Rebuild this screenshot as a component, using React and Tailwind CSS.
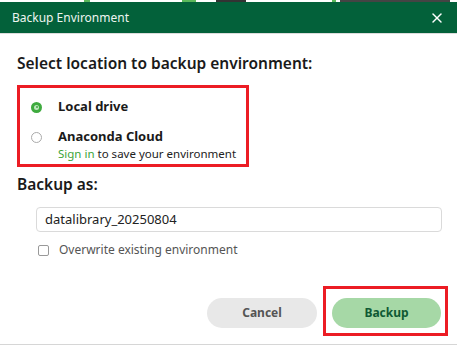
import { X } from 'lucide-react'

export default function App() {
  return (
    <div className="w-[457px] h-[348px] overflow-hidden bg-white flex flex-col text-[#1a1a1a]" style={{ fontFamily: '"Noto Sans", "Open Sans", sans-serif' }}>
      <div className="h-[2px] bg-white flex">
        <div className="ml-[84px] w-[6px] bg-[#5bb85b]" />
        <div className="ml-[92px] w-[14px] bg-[#5bb85b]" />
        <div className="ml-[20px] w-[30px] bg-[#333]" />
        <div className="ml-[86px] w-[4px] bg-[#5bb85b]" />
        <div className="ml-[4px] w-[110px] bg-[#444]" />
      </div>
      <div className="h-[32px] bg-[#03613a] flex items-center justify-between pl-3 pr-[12px] border-b border-[#dcdcdc]">
        <span className="text-[12px] text-[#eef5f0]">Backup Environment</span>
        <X className="w-[16px] h-[16px] text-white" strokeWidth={2.2} />
      </div>

      <div className="flex-1 flex flex-col px-[17px]">
        <h2 className="mt-[19px] text-[15.5px] leading-[20px] font-semibold">Select location to backup environment:</h2>

        <div className="mt-[12px] w-[232px] h-[82px] border-[3px] border-[#ec1c24] pl-[11px] pt-[10px]">
          <label className="flex items-center gap-[16px] h-[18px]">
            <span className="w-[11px] h-[11px] rounded-full bg-[#3fab3f] flex items-center justify-center">
              <span className="w-[5px] h-[5px] rounded-full bg-[#bfe6bf] flex items-center justify-center">
                <span className="w-[2px] h-[2px] rounded-full bg-[#3fab3f]" />
              </span>
            </span>
            <span className="text-[13px] font-bold">Local drive</span>
          </label>
          <label className="flex items-center gap-[16px] h-[18px] mt-[12px]">
            <span className="w-[11px] h-[11px] rounded-full border border-[#aaa] bg-white" />
            <span className="text-[13px] font-bold">Anaconda Cloud</span>
          </label>
          <p className="ml-[27px] text-[11.5px] leading-[14px] mt-[1px] text-[#222]">
            <span className="text-[#3aa53a]">Sign in</span> to save your environment
          </p>
        </div>

        <h2 className="mt-[7px] text-[15.5px] leading-[20px] font-semibold">Backup as:</h2>

        <div className="mt-[13px] ml-[19px] w-[406px] h-[25px] border border-[#dadada] rounded-[4px] flex items-center px-[8px] text-[13px] text-[#222]">
          datalibrary_20250804
        </div>

        <label className="mt-[10px] ml-[21px] flex items-center gap-[10px] h-[16px]">
          <span className="w-[11px] h-[11px] border border-[#999] rounded-[2px] bg-white" />
          <span className="text-[12px] text-[#555]">Overwrite existing environment</span>
        </label>

        <div className="mt-[28px] flex justify-end gap-[6px] -mr-[8px]">
          <div className="pt-[12px]">
            <button className="w-[110px] h-[30px] rounded-full bg-[#e8e8e8] text-[12px] font-bold text-[#555]">Cancel</button>
          </div>
          <div className="w-[125px] h-[50px] border-[3px] border-[#ec1c24] pl-[6px] pt-[9px]">
            <button className="w-[109px] h-[30px] rounded-full bg-[#a6d8a6] text-[12px] font-bold text-[#0f5a34]">Backup</button>
          </div>
        </div>
      </div>

      <div className="h-[4px] border-t border-[#d6d6d6] flex">
        <div className="ml-[183px] w-[12px] bg-[#e0e0e0]" />
        <div className="ml-[88px] w-[12px] bg-[#4aa84a]" />
        <div className="ml-[2px] w-[3px] bg-[#9fd09f]" />
        <div className="ml-[178px] w-[4px] bg-[#9fd09f]" />
        <div className="ml-[8px] w-[4px] bg-[#4aa84a]" />
      </div>
    </div>
  )
}
